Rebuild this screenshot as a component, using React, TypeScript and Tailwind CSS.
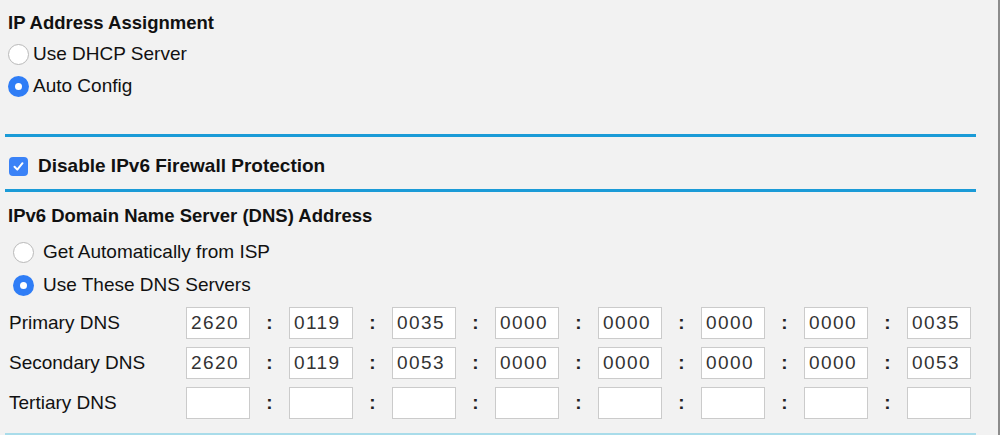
import React from 'react';

const primary = ['2620', '0119', '0035', '0000', '0000', '0000', '0000', '0035'];
const secondary = ['2620', '0119', '0053', '0000', '0000', '0000', '0000', '0053'];
const tertiary = ['', '', '', '', '', '', '', ''];

const Radio = ({ checked }: { checked?: boolean }) =>
    checked ? (
        <span className="w-[21px] h-[21px] rounded-full bg-[#2f7df6] flex items-center justify-center shrink-0">
            <span className="w-[7px] h-[7px] rounded-full bg-white" />
        </span>
    ) : (
        <span className="w-[21px] h-[21px] rounded-full bg-white border border-[#b9b9b9] shrink-0" />
    );

const DnsRow = ({ label, values }: { label: string; values: string[] }) => (
    <div className="flex items-center h-[32px]">
        <div className="w-[181px] pl-[4px] text-[19px] text-[#111]">{label}</div>
        {values.map((v, i) => (
            <React.Fragment key={i}>
                {i > 0 && (
                    <div className="w-[39px] text-center text-[19px] font-bold text-[#222]">:</div>
                )}
                <div className="w-[64px] h-[32px] bg-white border border-[#cbcbcb] pl-[4px] flex items-center text-[19px] tracking-[1.4px] text-[#333]">
                    {v}
                </div>
            </React.Fragment>
        ))}
    </div>
);

export default function App() {
    return (
        <div className="w-[1000px] h-[435px] bg-[#f2f2f2] flex overflow-hidden font-['Liberation_Sans',Arial,sans-serif] text-[#111]">
            <div className="flex-1 pl-[5px] pr-[22px] flex flex-col">
                {/* IP address assignment */}
                <div className="pt-[12px] h-[134px]">
                    <div className="h-[22px] leading-[22px] pl-[3px] text-[18.5px] font-bold">IP Address Assignment</div>
                    <div className="mt-[4px] h-[32px] flex items-center gap-[4px] pl-[3px] text-[19px]">
                        <Radio />
                        <span>Use DHCP Server</span>
                    </div>
                    <div className="h-[32px] flex items-center gap-[4px] pl-[3px] text-[19px]">
                        <Radio checked />
                        <span>Auto Config</span>
                    </div>
                </div>
                <div className="h-[3px] bg-[#1b9bd7]" />

                {/* firewall */}
                <div className="mt-[20px] h-[19px] flex items-center gap-[10px] pl-[4px]">
                    <span className="w-[19px] h-[19px] rounded-[4px] bg-[#3a82f7] flex items-center justify-center">
                        <svg width="13" height="13" viewBox="0 0 13 13" fill="none">
                            <path d="M2.5 6.8 L5.3 9.6 L10.5 3.2" stroke="white" strokeWidth="2" strokeLinecap="round" strokeLinejoin="round" />
                        </svg>
                    </span>
                    <span className="text-[19px] font-bold">Disable IPv6 Firewall Protection</span>
                </div>
                <div className="mt-[13px] h-[3px] bg-[#1b9bd7]" />

                {/* DNS */}
                <div className="mt-[13px] h-[22px] leading-[22px] pl-[3px] text-[18.5px] font-bold">
                    IPv6 Domain Name Server (DNS) Address
                </div>
                <div className="mt-[9px] h-[32px] flex items-center gap-[9px] pl-[8px] text-[19px]">
                    <Radio />
                    <span>Get Automatically from ISP</span>
                </div>
                <div className="mt-[1px] h-[32px] flex items-center gap-[9px] pl-[8px] text-[19px]">
                    <Radio checked />
                    <span>Use These DNS Servers</span>
                </div>
                <div className="mt-[6px] flex flex-col gap-[8px]">
                    <DnsRow label="Primary DNS" values={primary} />
                    <DnsRow label="Secondary DNS" values={secondary} />
                    <DnsRow label="Tertiary DNS" values={tertiary} />
                </div>
                <div className="mt-[14px] h-[2px] bg-[#a9dcea]" />
            </div>
            <div className="w-[2px] bg-[#8c8c8c]" />
        </div>
    );
}
